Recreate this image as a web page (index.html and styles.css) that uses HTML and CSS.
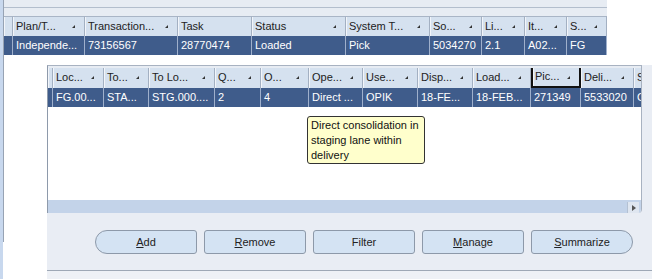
FILE: index.html
```html
<!DOCTYPE html>
<html lang="en">
<head>
  <meta charset="UTF-8" />
  <title>Transactions</title>
  <link rel="stylesheet" href="styles.css">
</head>
<body>
  <div class="screen">

    <!-- left frame edge -->
    <div class="strip"><div class="strip-upper"></div></div>

    <div class="content">

      <!-- Transaction grid -->
      <div class="top-panel">
        <div class="top-band"><div class="top-rule"></div></div>
        <div class="row head top-cols">
          <div class="cell stub"></div>
          <div class="cell">Plan/T...<i class="sort"></i></div>
          <div class="cell">Transaction...<i class="sort"></i></div>
          <div class="cell">Task</div>
          <div class="cell">Status<i class="sort"></i></div>
          <div class="cell">System T...<i class="sort"></i></div>
          <div class="cell">So...<i class="sort"></i></div>
          <div class="cell">Li...<i class="sort"></i></div>
          <div class="cell">It...<i class="sort"></i></div>
          <div class="cell">S...<i class="sort"></i></div>
        </div>
        <div class="row data top-cols">
          <div class="cell stub"></div>
          <div class="cell">Independe...</div>
          <div class="cell">73156567</div>
          <div class="cell">28770474</div>
          <div class="cell">Loaded</div>
          <div class="cell">Pick</div>
          <div class="cell">5034270</div>
          <div class="cell">2.1</div>
          <div class="cell">A02...</div>
          <div class="cell">FG</div>
        </div>
      </div>

      <!-- Detail grid + actions -->
      <div class="detail">
        <div class="grid">
          <div class="grid-pad"></div>
          <div class="row head detail-cols">
            <div class="cell stub"></div>
            <div class="cell">Loc...<i class="sort"></i></div>
            <div class="cell">To...<i class="sort"></i></div>
            <div class="cell">To Lo...<i class="sort"></i></div>
            <div class="cell">Q...<i class="sort"></i></div>
            <div class="cell">O...<i class="sort"></i></div>
            <div class="cell">Ope...<i class="sort"></i></div>
            <div class="cell">Use...<i class="sort"></i></div>
            <div class="cell">Disp...<i class="sort"></i></div>
            <div class="cell">Load...<i class="sort"></i></div>
            <div class="cell focus">Pic...<i class="sort"></i></div>
            <div class="cell">Deli...<i class="sort"></i></div>
            <div class="cell">S</div>
          </div>
          <div class="row data detail-cols">
            <div class="cell stub"></div>
            <div class="cell">FG.00...</div>
            <div class="cell">STA...</div>
            <div class="cell">STG.000....</div>
            <div class="cell">2</div>
            <div class="cell">4</div>
            <div class="cell">Direct ...</div>
            <div class="cell">OPIK</div>
            <div class="cell">18-FE...</div>
            <div class="cell">18-FEB...</div>
            <div class="cell">271349</div>
            <div class="cell">5533020</div>
            <div class="cell">C</div>
          </div>
          <div class="grid-fill"></div>
          <div class="hscroll"><span class="arrow"></span></div>
        </div>

        <div class="btn-bar">
          <button class="btn first"><u>A</u>dd</button>
          <button class="btn"><u>R</u>emove</button>
          <button class="btn">Filter</button>
          <button class="btn"><u>M</u>anage</button>
          <button class="btn last"><u>S</u>ummarize</button>
        </div>
        <div class="bottom-bar"></div>
      </div>
    </div>

    <div class="tooltip">Direct consolidation in<br>staging lane within<br>delivery</div>
  </div>
</body>
</html>
```

FILE: styles.css
```css
body { margin: 0; background: #fff; font-family: "Liberation Sans", Arial, sans-serif; font-size: 11px; color: #1e1e1e; }
.screen { position: relative; display: flex; width: 660px; height: 279px; overflow: hidden; }

.strip { width: 3px; background: #c8d8ee; display: flex; flex-direction: column; }
.strip-upper { width: 4px; height: 242px; box-sizing: border-box; border-right: 1px solid #97a3b4; background: #c8d8ee; }
.content { flex: 1; padding-left: 1px; }

.top-panel { width: 603px; }
.top-band { height: 16px; background: #e7ecf3; }
.top-rule { height: 7px; border-bottom: 1px solid #b3becd; }

.row { display: grid; }
.top-cols { grid-template-columns: 9px 72px 93px 74px 94px 84px 52px 43px 42px 40px; }
.detail-cols { grid-template-columns: 5px 51px 45px 66px 46px 48px 54px 55px 55px 58px 50px 53px 40px; }

.cell { position: relative; box-sizing: border-box; padding-left: 3px; white-space: nowrap; overflow: hidden; }
.head .cell { height: 20px; line-height: 19px; background: #d5e1ef; border-top: 1px solid #a9b5c6; border-right: 1px solid #a3b0c2; box-shadow: inset 1px 0 #f2f5fa; color: #222; }
.data .cell { height: 19px; line-height: 19px; background: #3f5c8b; color: #fff; border-right: 1px solid #9fb0cc; }
.head .focus { border: 2px solid #111; line-height: 17px; padding-left: 2px; }

.sort { position: absolute; right: 9px; top: 8px; width: 3px; height: 3px; background: #333; clip-path: polygon(100% 0, 100% 100%, 0 100%); }

.detail { margin: 10px 0 0 43px; width: 605px; height: 214px; background: #e9edf4; }
.grid { width: 595px; height: 148px; box-sizing: border-box; display: flex; flex-direction: column; background: #fff; border-top: 1px solid #a8b2c1; border-right: 1px solid #a8b2c1; border-left: 1px solid #8e9aab; border-bottom-right-radius: 4px; overflow: hidden; }
.grid-pad { height: 2px; background: #e7ecf3; }
.grid .head .cell { border-top: 0; }
.grid-fill { flex: 1; }
.hscroll { height: 13px; background: #c3d3e9; display: flex; justify-content: flex-end; align-items: flex-end; }
.arrow { position: relative; width: 11px; height: 11px; margin-right: 2px; background: #dfe6f0; border-left: 1px solid #b4c1d3; }
.arrow::after { content: ""; position: absolute; left: 4px; top: 3px; border-left: 4px solid #555; border-top: 3px solid transparent; border-bottom: 3px solid transparent; }

.btn-bar { height: 57px; box-sizing: border-box; padding: 17px 0 0 48px; display: flex; gap: 7px; }
.btn { width: 102px; height: 24px; padding: 0; font-family: inherit; font-size: 11px; color: #222; background: #d4e3f3; border: 1px solid #8d99a9; border-radius: 3px; }
.btn.first { border-radius: 12px 3px 3px 12px; }
.btn.last { border-radius: 3px 12px 12px 3px; }

.bottom-bar { height: 9px; border-top: 1px solid #9ea8b6; background: #eef1f6; }

.tooltip { position: absolute; left: 307px; top: 116px; width: 118px; height: 48px; box-sizing: border-box; padding: 1px 3px; line-height: 15px; background: #ffffcc; border: 1px solid #333; border-radius: 3px; color: #111; }
```
